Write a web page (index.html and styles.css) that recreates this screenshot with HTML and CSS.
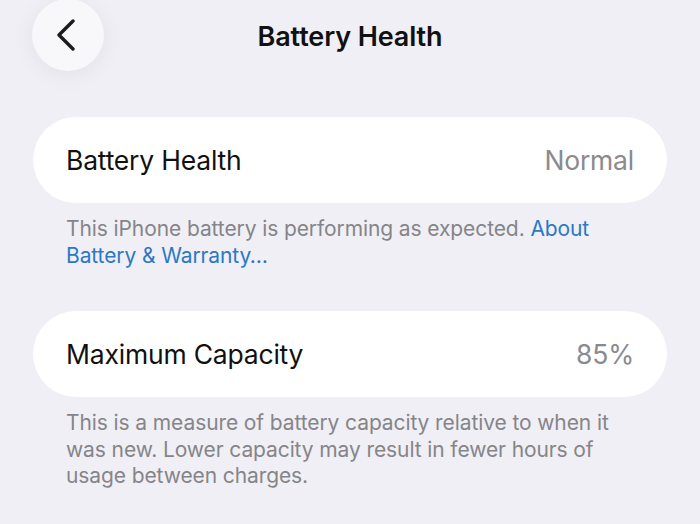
FILE: index.html
```html
<!DOCTYPE html>
<html lang="en">
<head>
    <meta charset="UTF-8">
    <meta name="viewport" content="width=device-width, initial-scale=1.0">
    <title>Battery Health</title>
    <link rel="stylesheet" href="styles.css">
</head>
<body>
    <header class="nav-bar">
        <button class="back-btn" aria-label="Back">
            <svg width="20" height="32" viewBox="0 0 20 32">
                <path d="M17 2 L3 16 L17 30" fill="none" stroke="#1c1c1e" stroke-width="3.4" stroke-linecap="round" stroke-linejoin="round"/>
            </svg>
        </button>
        <h1 class="nav-title">Battery Health</h1>
        <div></div>
    </header>

    <main class="content">
        <section class="group">
            <div class="cell">
                <span class="cell-label">Battery Health</span>
                <span class="cell-value">Normal</span>
            </div>
            <p class="footer">This iPhone battery is performing as expected. <a href="#">About Battery &amp; Warranty…</a></p>
        </section>

        <section class="group">
            <div class="cell">
                <span class="cell-label">Maximum Capacity</span>
                <span class="cell-value">85%</span>
            </div>
            <p class="footer">This is a measure of battery capacity relative to when it was new. Lower capacity may result in fewer hours of usage between charges.</p>
        </section>
    </main>
</body>
</html>
```

FILE: styles.css
```css
body {
    margin: 0;
    background-color: #f0eff5;
    font-family: Inter, "Noto Sans", sans-serif;
    color: #111;
}
.nav-bar {
    display: grid;
    grid-template-columns: 1fr auto 1fr;
    align-items: center;
    height: 72px;
    padding: 0 32px;
}
.back-btn {
    width: 72px;
    height: 72px;
    margin-top: -2px;
    border: none;
    border-radius: 50%;
    background-color: #f8f8fb;
    box-shadow: 0 4px 24px rgba(0, 0, 0, 0.06);
    display: flex;
    align-items: center;
    justify-content: center;
    padding: 0 4px 0 0;
    cursor: pointer;
}
.nav-title {
    margin: 0;
    font-size: 27px;
    font-weight: 600;
    letter-spacing: -0.1px;
    color: #111;
}
.content {
    padding: 45px 33px 0;
}
.group {
    margin-bottom: 42px;
}
.cell {
    display: flex;
    justify-content: space-between;
    align-items: center;
    height: 86px;
    padding: 0 33px;
    background-color: #fff;
    border-radius: 43px;
    font-size: 26.5px;
    letter-spacing: -0.2px;
}
.cell-label {
    color: #111;
}
.cell-value {
    color: #8a8a8e;
}
.footer {
    margin: 13px 0 0;
    padding: 0 33px;
    font-size: 21px;
    line-height: 26.5px;
    letter-spacing: -0.1px;
    color: #858589;
}
.footer a {
    color: #2a78c6;
    text-decoration: none;
}
```
